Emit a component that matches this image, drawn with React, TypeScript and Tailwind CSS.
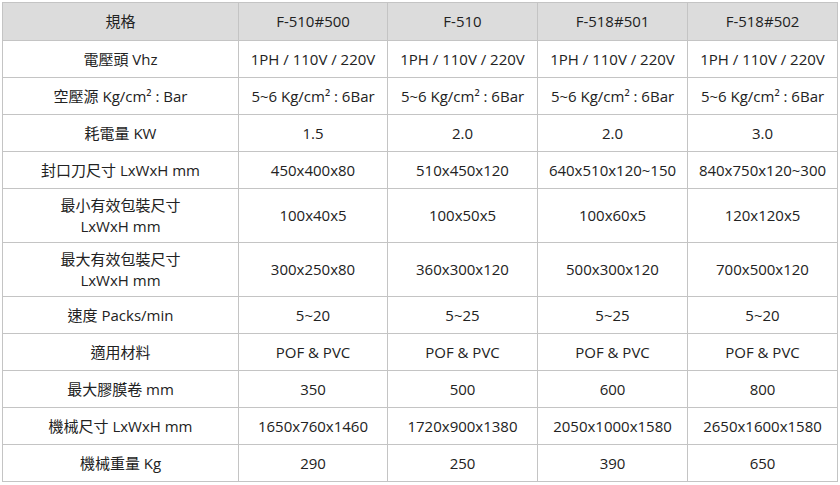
const header = ["規格", "F-510#500", "F-510", "F-518#501", "F-518#502"];

const rows: { label: string[]; cells: string[] }[] = [
  { label: ["電壓頭 Vhz"], cells: ["1PH / 110V / 220V", "1PH / 110V / 220V", "1PH / 110V / 220V", "1PH / 110V / 220V"] },
  { label: ["空壓源 Kg/cm² : Bar"], cells: ["5~6 Kg/cm² : 6Bar", "5~6 Kg/cm² : 6Bar", "5~6 Kg/cm² : 6Bar", "5~6 Kg/cm² : 6Bar"] },
  { label: ["耗電量 KW"], cells: ["1.5", "2.0", "2.0", "3.0"] },
  { label: ["封口刀尺寸 LxWxH mm"], cells: ["450x400x80", "510x450x120", "640x510x120~150", "840x750x120~300"] },
  { label: ["最小有效包裝尺寸", "LxWxH mm"], cells: ["100x40x5", "100x50x5", "100x60x5", "120x120x5"] },
  { label: ["最大有效包裝尺寸", "LxWxH mm"], cells: ["300x250x80", "360x300x120", "500x300x120", "700x500x120"] },
  { label: ["速度 Packs/min"], cells: ["5~20", "5~25", "5~25", "5~20"] },
  { label: ["適用材料"], cells: ["POF & PVC", "POF & PVC", "POF & PVC", "POF & PVC"] },
  { label: ["最大膠膜卷 mm"], cells: ["350", "500", "600", "800"] },
  { label: ["機械尺寸 LxWxH mm"], cells: ["1650x760x1460", "1720x900x1380", "2050x1000x1580", "2650x1600x1580"] },
  { label: ["機械重量 Kg"], cells: ["290", "250", "390", "650"] },
];

export default function App() {
  return (
    <div
      className="w-[840px] h-[485px] bg-white pt-[2px] pl-[2px] text-[#222] text-[15px]"
      style={{ fontFamily: '"Open Sans", "Noto Sans CJK TC", sans-serif' }}
    >
      <table className="border-collapse border border-[#c4c4c4] table-fixed w-[835px]">
        <colgroup>
          <col className="w-[236px]" />
          <col className="w-[149px]" />
          <col className="w-[150px]" />
          <col className="w-[150px]" />
          <col className="w-[150px]" />
        </colgroup>
        <thead>
          <tr className="h-[38px] bg-[#dcdcdc]">
            {header.map((h) => (
              <th key={h} className="border border-[#c4c4c4] font-normal text-center leading-tight">
                {h}
              </th>
            ))}
          </tr>
        </thead>
        <tbody>
          {rows.map((r, i) => (
            <tr key={i} className={r.label.length > 1 ? "h-[54px]" : "h-[37px]"}>
              <td className="border border-[#c4c4c4] text-center leading-[21px]">
                {r.label.map((l) => (
                  <div key={l}>{l}</div>
                ))}
              </td>
              {r.cells.map((c, j) => (
                <td key={j} className="border border-[#c4c4c4] text-center leading-tight whitespace-nowrap">
                  {c}
                </td>
              ))}
            </tr>
          ))}
        </tbody>
      </table>
    </div>
  );
}
